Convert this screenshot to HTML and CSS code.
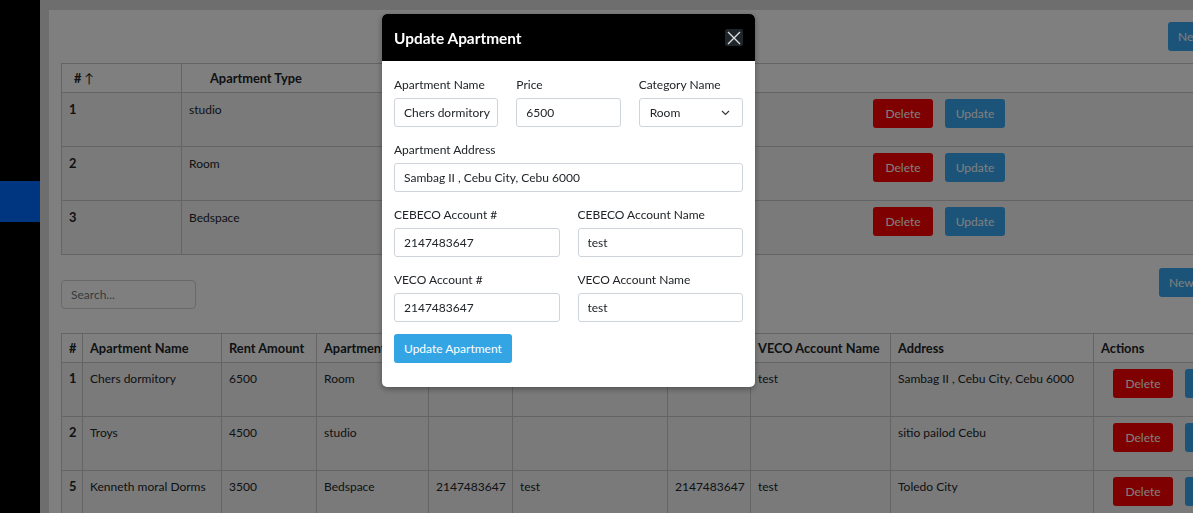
FILE: index.html
```html
<!DOCTYPE html>
<html>
<head>
<meta charset="utf-8">
<title>Apartments</title>
<link rel="stylesheet" href="styles.css">
</head>
<body>
<div class="app">
  <aside class="sidebar"><div class="side-item"></div></aside>
  <main class="main">
    <section class="card">
      <div class="toolbar">
        <button class="btn btn-blue w-new1">New Category</button>
      </div>
      <table class="tbl tbl-types">
        <colgroup><col class="t1"><col class="t2"><col class="t3"></colgroup>
        <thead>
          <tr><th class="th-num"># <span class="arrow">↑</span></th><th class="th-type">Apartment Type</th><th></th></tr>
        </thead>
        <tbody>
          <tr><td class="num">1</td><td>studio</td><td class="act act-top"><div class="btns"><button class="btn btn-red">Delete</button><button class="btn btn-blue">Update</button></div></td></tr>
          <tr><td class="num">2</td><td>Room</td><td class="act act-top"><div class="btns"><button class="btn btn-red">Delete</button><button class="btn btn-blue">Update</button></div></td></tr>
          <tr><td class="num">3</td><td>Bedspace</td><td class="act act-top"><div class="btns"><button class="btn btn-red">Delete</button><button class="btn btn-blue">Update</button></div></td></tr>
        </tbody>
      </table>

      <div class="search-row">
        <input class="search" type="text" placeholder="Search...">
        <button class="btn btn-blue w-new2">New Apartment</button>
      </div>

      <table class="tbl tbl-apts">
        <colgroup>
          <col class="a1"><col class="a2"><col class="a3"><col class="a4"><col class="a5">
          <col class="a6"><col class="a7"><col class="a8"><col class="a9"><col class="a10">
        </colgroup>
        <thead>
          <tr><th>#</th><th>Apartment Name</th><th>Rent Amount</th><th>Apartment</th><th>CEBECO #</th><th>CEBECO Account</th><th>VECO #</th><th>VECO Account Name</th><th>Address</th><th>Actions</th></tr>
        </thead>
        <tbody>
          <tr><td class="num">1</td><td>Chers dormitory</td><td>6500</td><td>Room</td><td>2147483647</td><td>test</td><td>2147483647</td><td>test</td><td>Sambag II , Cebu City, Cebu 6000</td><td class="act act-bot"><div class="btns"><button class="btn btn-red">Delete</button><button class="btn btn-blue">Update</button></div></td></tr>
          <tr><td class="num">2</td><td>Troys</td><td>4500</td><td>studio</td><td></td><td></td><td></td><td></td><td>sitio pailod Cebu</td><td class="act act-bot"><div class="btns"><button class="btn btn-red">Delete</button><button class="btn btn-blue">Update</button></div></td></tr>
          <tr><td class="num">5</td><td>Kenneth moral Dorms</td><td>3500</td><td>Bedspace</td><td>2147483647</td><td>test</td><td>2147483647</td><td>test</td><td>Toledo City</td><td class="act act-bot"><div class="btns"><button class="btn btn-red">Delete</button><button class="btn btn-blue">Update</button></div></td></tr>
        </tbody>
      </table>
    </section>
  </main>
</div>

<div class="overlay"></div>

<div class="modal">
  <div class="modal-header">
    <h5 class="modal-title">Update Apartment</h5>
    <button class="btn-close" aria-label="Close">
      <svg width="14" height="14" viewBox="0 0 14 14"><path d="M1 1L13 13M13 1L1 13" stroke="#dcdcdc" stroke-width="1.4" fill="none"/></svg>
    </button>
  </div>
  <div class="modal-body">
    <div class="grid3 group">
      <div><label>Apartment Name</label><input class="input input-tight" type="text" value="Chers dormitory"></div>
      <div><label>Price</label><input class="input" type="text" value="6500"></div>
      <div><label>Category Name</label>
        <div class="select"><span>Room</span>
          <svg width="9" height="6" viewBox="0 0 9 6"><path d="M1 1L4.5 4.5L8 1" stroke="#343a40" stroke-width="1.2" fill="none"/></svg>
        </div>
      </div>
    </div>
    <div class="group">
      <label>Apartment Address</label><input class="input" type="text" value="Sambag II , Cebu City, Cebu 6000">
    </div>
    <div class="grid2 group">
      <div><label>CEBECO Account #</label><input class="input" type="text" value="2147483647"></div>
      <div><label>CEBECO Account Name</label><input class="input" type="text" value="test"></div>
    </div>
    <div class="grid2 group last">
      <div><label>VECO Account #</label><input class="input" type="text" value="2147483647"></div>
      <div><label>VECO Account Name</label><input class="input" type="text" value="test"></div>
    </div>
    <button class="btn btn-submit">Update Apartment</button>
  </div>
</div>
</body>
</html>
```

FILE: styles.css
```css
* { box-sizing: border-box; }
html, body { margin: 0; height: 100%; }
body {
  font-family: Lato, "Noto Sans", "DejaVu Sans", sans-serif;
  font-size: 12px;
  color: #212529;
  background: #dcdcdc;
  overflow: hidden;
}
.app { display: flex; height: 513px; }
.sidebar { width: 40px; flex: none; background: #000; padding-top: 181px; }
.side-item { height: 41px; background: #006aff; }
.main { flex: 1; min-width: 0; padding: 10px 0 0 9px; overflow: hidden; }
.card { width: 1224px; min-height: 600px; background: #fff; padding: 12px; }

.toolbar { display: flex; justify-content: flex-end; height: 29px; margin-bottom: 12px; }
.btn {
  font: inherit;
  border: 0;
  border-radius: 3px;
  height: 29px;
  padding: 0 10px;
  color: #fff;
  cursor: pointer;
  white-space: nowrap;
}
.btn-blue { background: #36a8f0; }
.btn-red { background: #ff0000; }
.w-new1 { width: 93px; text-align: left; }
.w-new2 { width: 102px; text-align: left; }

.tbl { width: 1200px; border-collapse: collapse; table-layout: fixed; }
.tbl th, .tbl td { border: 1px solid #c8c8c8; text-align: left; }
.tbl th {
  height: 29px;
  padding: 0 7px;
  font-size: 12.8px;
  font-weight: 700;
  line-height: 16px;
  background: #fff;
  vertical-align: middle;
  white-space: nowrap;
  overflow: hidden;
}
.tbl td {
  height: 54px;
  padding: 6px 7px 7px;
  line-height: 19px;
  background: #f4f4f4;
  vertical-align: top;
  white-space: nowrap;
}
.tbl td.num { font-weight: 700; font-size: 12.8px; }
.tbl-types td { padding-top: 7px; }
.tbl-types .th-num { padding-left: 12px; }
.tbl-types .th-type { padding-left: 28px; }
.arrow { font-weight: 400; }
.tbl td.act { padding-top: 6px; }

.t1 { width: 120px; }
.t2 { width: 480px; }
.t3 { width: 600px; }

.a1 { width: 21px; }
.a2 { width: 139px; }
.a3 { width: 95px; }
.a4 { width: 112px; }
.a5 { width: 84px; }
.a6 { width: 155px; }
.a7 { width: 83px; }
.a8 { width: 140px; }
.a9 { width: 203px; }
.a10 { width: 168px; }

.btns { display: flex; gap: 12px; }
.btns .btn { width: 60px; padding: 0; text-align: center; }
.tbl td.act-top { padding-left: 211px; }
.tbl td.act-bot { padding-left: 19px; }

.search-row {
  display: flex;
  justify-content: space-between;
  align-items: flex-start;
  margin-top: 13px;
  margin-bottom: 24px;
}
.search {
  font: inherit;
  width: 135px;
  height: 29px;
  margin-top: 12px;
  border: 1px solid #ced4da;
  border-radius: 4px;
  padding: 0 9px;
  color: #212529;
  background: #fff;
}
.search::placeholder { color: #6c757d; }

.overlay { position: fixed; inset: 0; background: rgba(0, 0, 0, 0.5); z-index: 10; }

.modal {
  position: fixed;
  left: 382px;
  top: 14px;
  width: 373px;
  background: #fff;
  border-radius: 5px;
  overflow: hidden;
  z-index: 20;
  box-shadow: 0 2px 6px rgba(0, 0, 0, 0.35);
}
.modal-header {
  height: 47px;
  background: #000;
  display: flex;
  align-items: center;
  justify-content: space-between;
  padding: 0 12px;
}
.modal-title { margin: 0; color: #fff; font-size: 15.4px; font-weight: 700; }
.btn-close {
  width: 18px;
  height: 17px;
  background: #1f262b;
  border: 0;
  padding: 0;
  border-radius: 2px;
  display: flex;
  align-items: center;
  justify-content: center;
}
.modal-body { padding: 14px 12px 24px; }
.grid3 { display: grid; grid-template-columns: repeat(3, 1fr); column-gap: 18px; }
.grid2 { display: grid; grid-template-columns: 1fr 1fr; column-gap: 18px; }
.group { margin-bottom: 13px; }
.group.last { margin-bottom: 12px; }
label { display: block; line-height: 19px; margin-bottom: 4px; color: #212529; }
.input {
  display: block;
  width: 100%;
  font: inherit;
  height: 29px;
  border: 1px solid #ced4da;
  border-radius: 3px;
  padding: 0 9px;
  color: #212529;
  background: #fff;
}
.input-tight { padding-right: 3px; }
.select {
  height: 29px;
  border: 1px solid #ced4da;
  border-radius: 3px;
  padding: 0 12px 0 10px;
  display: flex;
  align-items: center;
  justify-content: space-between;
}
.btn-submit { background: #33a5e5; }
```
